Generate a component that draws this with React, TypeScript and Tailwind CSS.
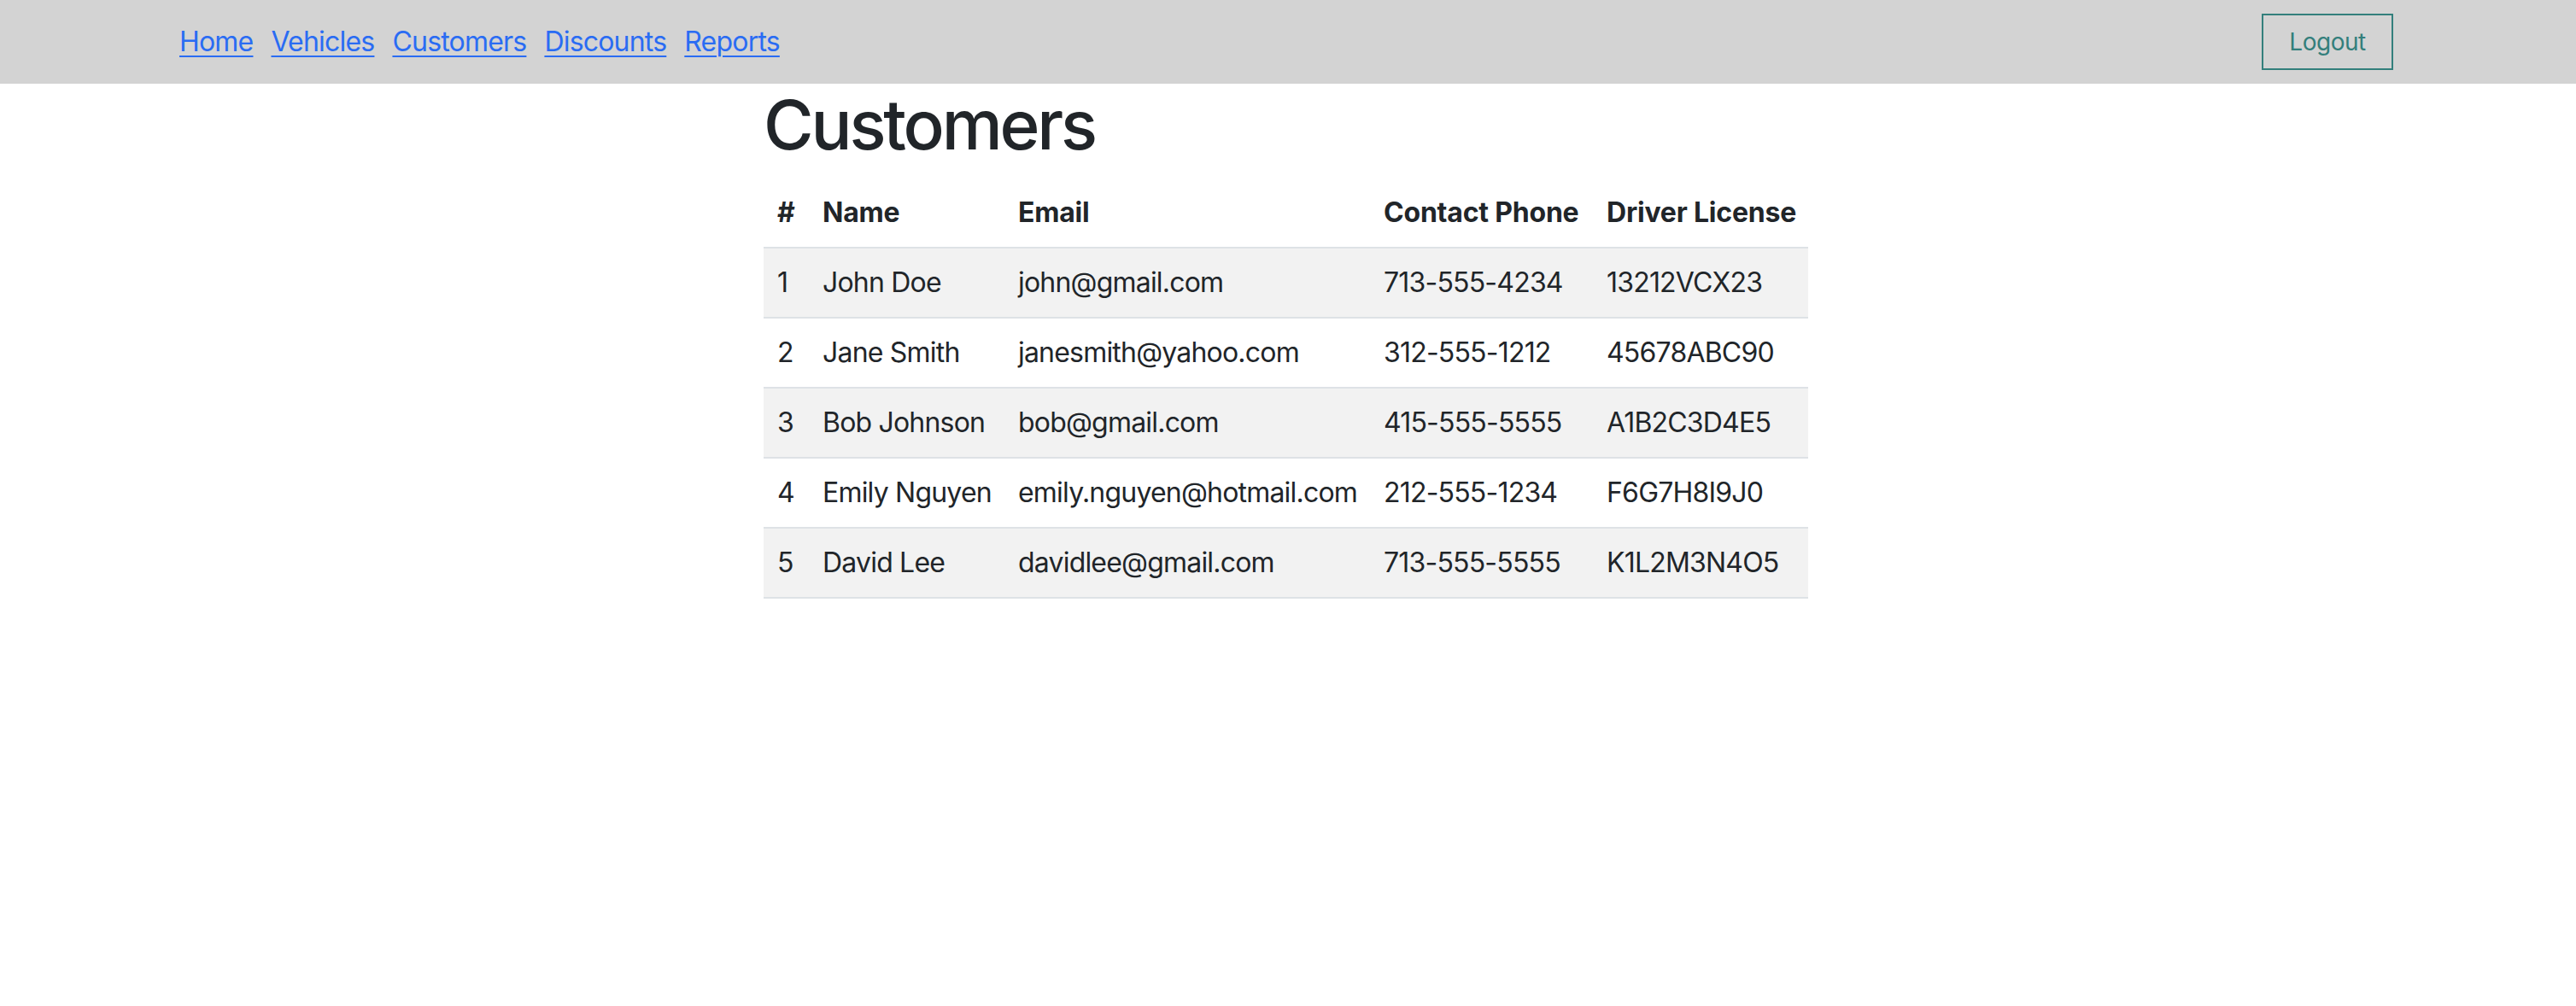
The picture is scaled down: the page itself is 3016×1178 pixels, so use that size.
import React from 'react';

const customers = [
  { id: 1, name: 'John Doe', email: 'john@gmail.com', phone: '713-555-4234', license: '13212VCX23' },
  { id: 2, name: 'Jane Smith', email: 'janesmith@yahoo.com', phone: '312-555-1212', license: '45678ABC90' },
  { id: 3, name: 'Bob Johnson', email: 'bob@gmail.com', phone: '415-555-5555', license: 'A1B2C3D4E5' },
  { id: 4, name: 'Emily Nguyen', email: 'emily.nguyen@hotmail.com', phone: '212-555-1234', license: 'F6G7H8I9J0' },
  { id: 5, name: 'David Lee', email: 'davidlee@gmail.com', phone: '713-555-5555', license: 'K1L2M3N4O5' },
];

const links = ['Home', 'Vehicles', 'Customers', 'Discounts', 'Reports'];

export default function App() {
  return (
    <div className="min-h-screen bg-white text-[#212529] font-['Inter','Liberation_Sans',sans-serif]">
      <nav className="h-[98px] bg-[#d3d3d3] flex items-center justify-between pl-[210px] pr-[214px]">
        <div className="flex items-center gap-[21px]">
          {links.map((label) => (
            <a
              key={label}
              href="#"
              className="text-[32px] leading-[48px] tracking-[-0.8px] text-[#2a6cf3] underline decoration-2 underline-offset-[5px]"
            >
              {label}
            </a>
          ))}
        </div>
        <button className="h-[66px] w-[154px] border-2 border-[#337f7c] text-[#337f7c] text-[28px] leading-[42px] tracking-[-0.5px] bg-transparent">
          Logout
        </button>
      </nav>

      <div className="pl-[894px]">
        <h1 className="text-[80px] leading-[96px] font-medium mb-[15px] tracking-[-3.2px]">Customers</h1>
        <table className="w-[1223px] table-fixed border-collapse text-[32px] leading-[48px] tracking-[-0.8px]">
          <colgroup>
            <col className="w-[53px]" />
            <col className="w-[229px]" />
            <col className="w-[428px]" />
            <col className="w-[261px]" />
            <col className="w-[252px]" />
          </colgroup>
          <thead>
            <tr className="border-b-2 border-[#dee2e6] tracking-[-0.2px]">
              <th className="p-[16px] text-left font-bold">#</th>
              <th className="p-[16px] text-left font-bold">Name</th>
              <th className="p-[16px] text-left font-bold">Email</th>
              <th className="p-[16px] text-left font-bold whitespace-nowrap">Contact Phone</th>
              <th className="p-[16px] text-left font-bold whitespace-nowrap">Driver License</th>
            </tr>
          </thead>
          <tbody>
            {customers.map((c, i) => (
              <tr key={c.id} className={`border-b-2 border-[#dee2e6] ${i % 2 === 0 ? 'bg-[#f2f2f2]' : 'bg-white'}`}>
                <td className="p-[16px]">{c.id}</td>
                <td className="p-[16px] whitespace-nowrap">{c.name}</td>
                <td className="p-[16px] whitespace-nowrap">{c.email}</td>
                <td className="p-[16px] whitespace-nowrap">{c.phone}</td>
                <td className="p-[16px] whitespace-nowrap">{c.license}</td>
              </tr>
            ))}
          </tbody>
        </table>
      </div>
    </div>
  );
}
